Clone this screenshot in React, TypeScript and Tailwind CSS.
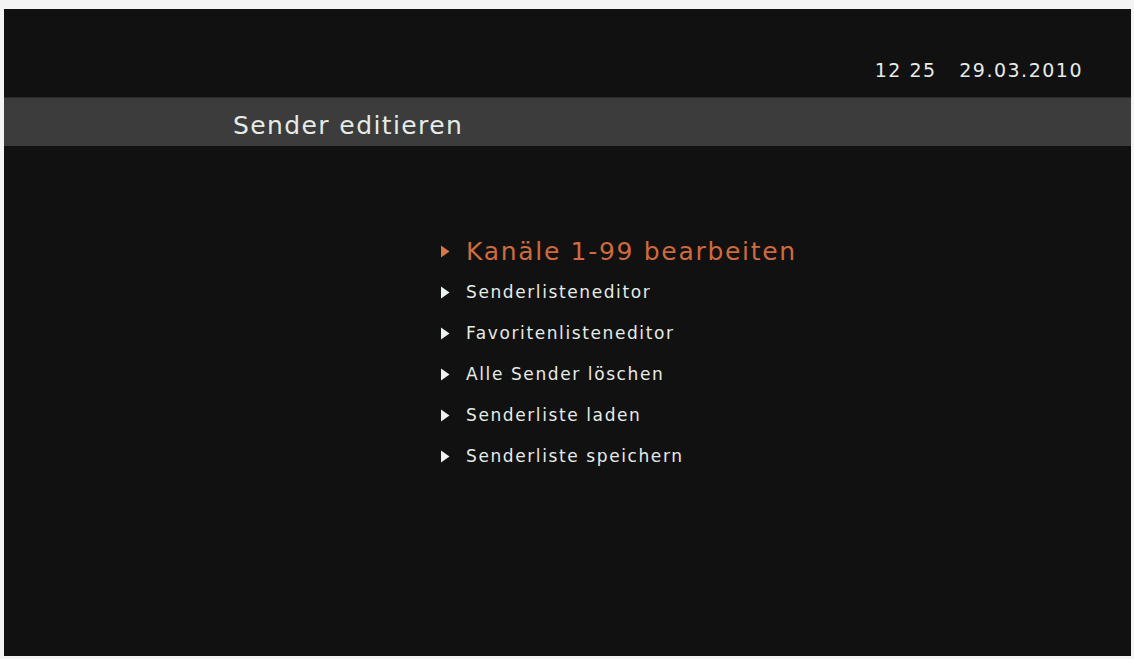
import React from 'react';

const items = [
  'Senderlisteneditor',
  'Favoritenlisteneditor',
  'Alle Sender löschen',
  'Senderliste laden',
  'Senderliste speichern',
];

const Arrow = ({ color }: { color: string }) => (
  <svg width="10" height="13" viewBox="0 0 10 13" className="shrink-0">
    <path d="M1 0.5 L9.5 6.5 L1 12.5 Z" fill={color} />
  </svg>
);

export default function App() {
  return (
    <div className="w-[1134px] h-[659px] bg-[#f4f4f4] pt-[9px] pl-[4px] pr-[3px] pb-[3px]">
      <div
        className="w-full h-full bg-[#111111] flex flex-col text-[#e6ebe6]"
        style={{ fontFamily: '"DejaVu Sans", "Liberation Sans", sans-serif' }}
      >
        <div className="h-[88px] flex items-end justify-end pr-[48px] pb-[13px]">
          <span className="text-[19px] tracking-[1.5px] whitespace-pre">12 25   29.03.2010</span>
        </div>

        <div className="h-[49px] bg-[#3c3c3c] flex items-center pl-[229px] pt-[8px] border-t border-[#2a2a2a]">
          <span className="text-[25px] tracking-[1.4px]">Sender editieren</span>
        </div>

        <div className="mt-[85px] pl-[436px] flex flex-col">
          <div className="h-[41px] flex items-center gap-[16px]">
            <Arrow color="#d8784a" />
            <span className="text-[25px] text-[#cf6a3e] tracking-[1.7px]">Kanäle 1-99 bearbeiten</span>
          </div>
          {items.map((label) => (
            <div key={label} className="h-[41px] flex items-center gap-[16px]">
              <Arrow color="#eef2ee" />
              <span className="text-[17px] tracking-[1.6px]">{label}</span>
            </div>
          ))}
        </div>
      </div>
    </div>
  );
}
